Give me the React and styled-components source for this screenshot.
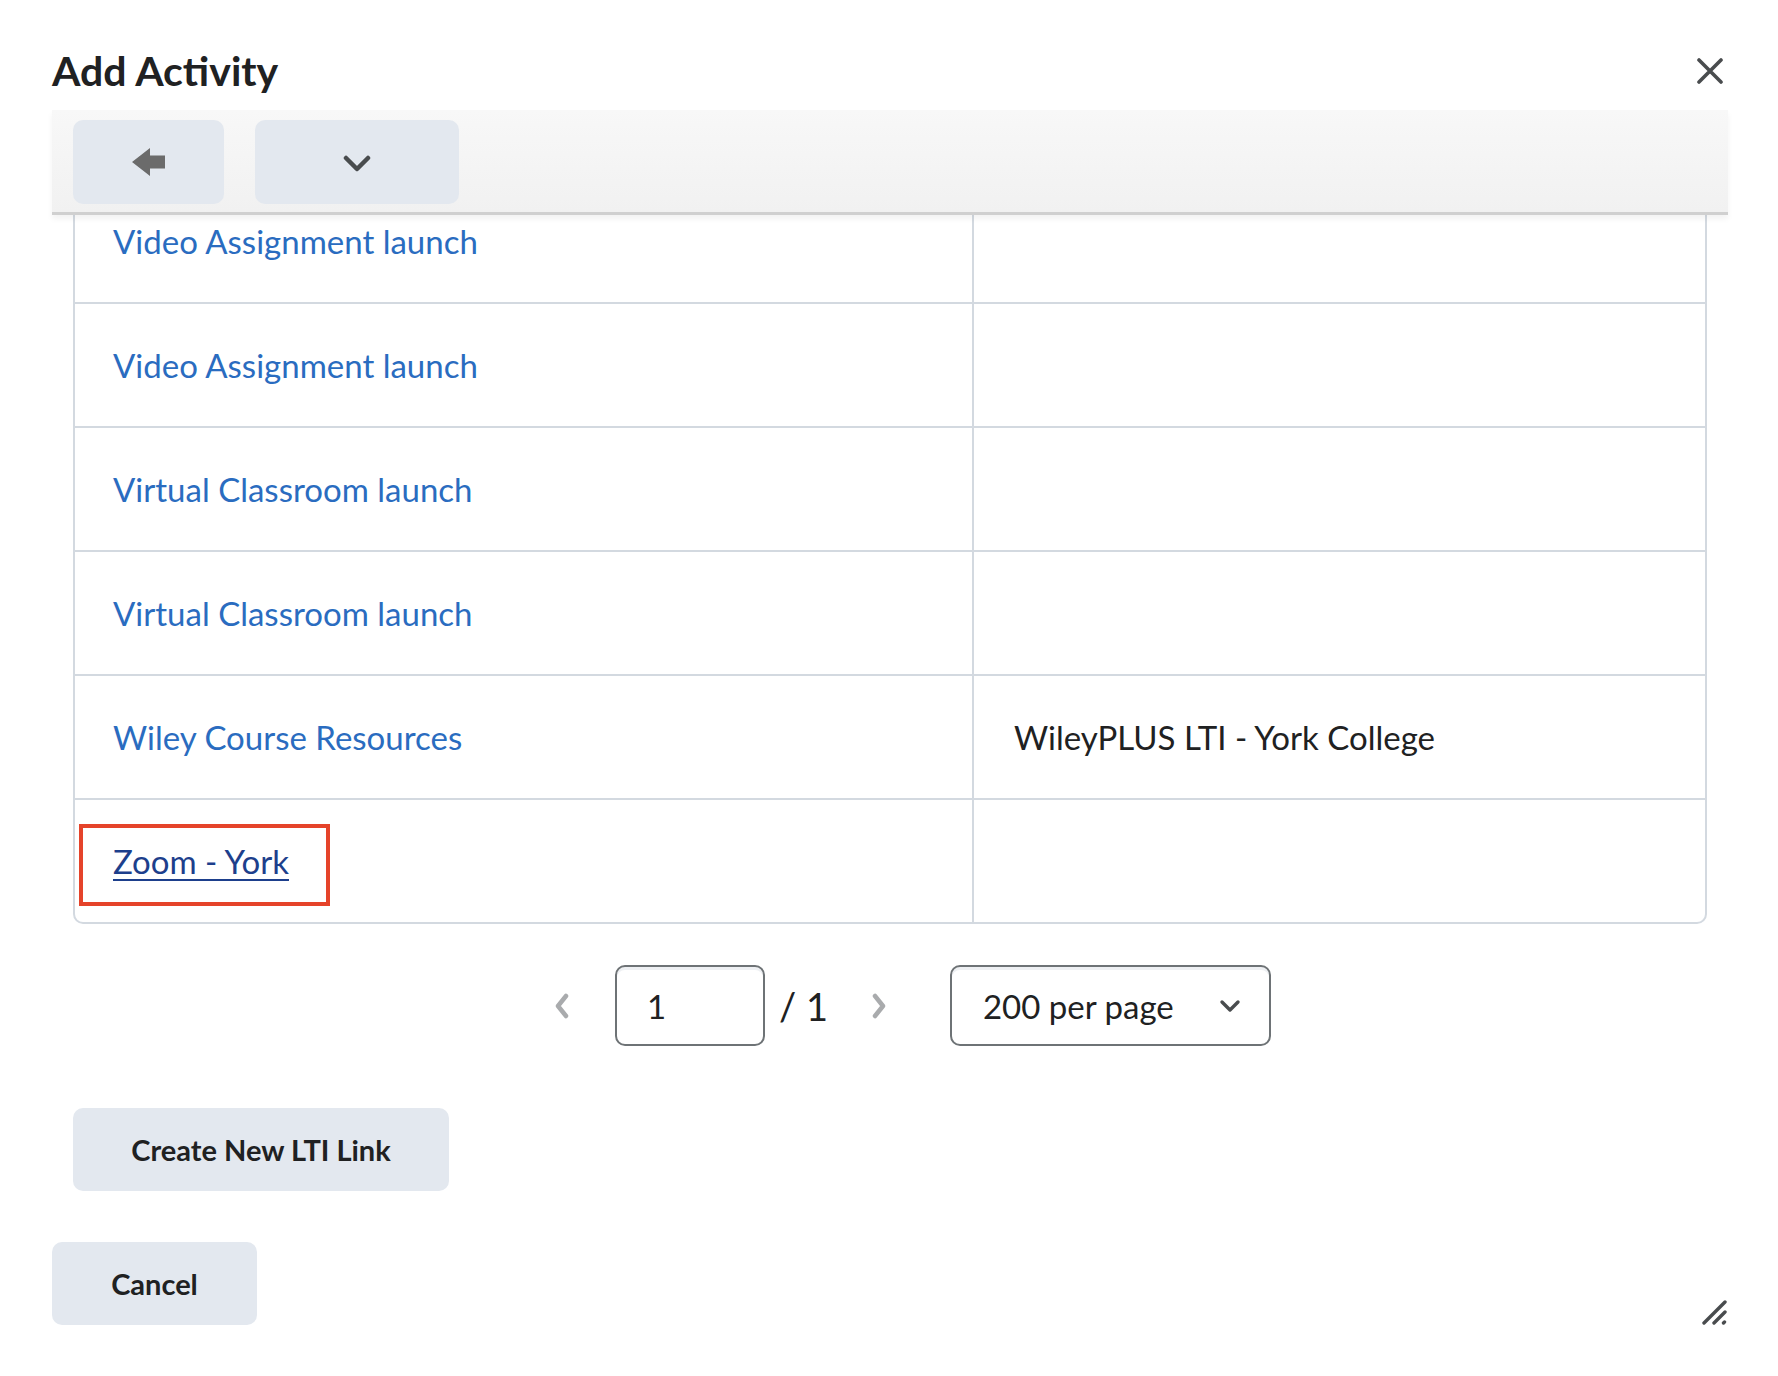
import React, { useLayoutEffect, useRef } from "react";
import styled, { createGlobalStyle } from "styled-components";

const rows = [
  { name: "Video Assignment launch", desc: "" },
  { name: "Video Assignment launch", desc: "" },
  { name: "Virtual Classroom launch", desc: "" },
  { name: "Virtual Classroom launch", desc: "" },
  { name: "Wiley Course Resources", desc: "WileyPLUS LTI - York College" },
  { name: "Zoom - York", desc: "", highlighted: true },
];

export default function App() {
  const scrollRef = useRef(null);

  useLayoutEffect(() => {
    // the list is shown scrolled a little, first row cut by the toolbar
    if (scrollRef.current) scrollRef.current.scrollTop = 35;
  }, []);

  return (
    <Dialog>
      <GlobalStyle />
      <Header>
        <Title>Add Activity</Title>
        <CloseButton aria-label="Close">
          <svg width="26" height="26" viewBox="0 0 26 26">
            <path
              d="M2 2 L24 24 M24 2 L2 24"
              stroke="#494c4e"
              strokeWidth="3.6"
              strokeLinecap="round"
            />
          </svg>
        </CloseButton>
      </Header>

      <Toolbar>
        <ToolButton $width={151} aria-label="Back">
          <svg width="34" height="30" viewBox="0 0 34 30">
            <path d="M0 15 L18 1 L18 8.5 L33 8.5 L33 21.5 L18 21.5 L18 29 Z" fill="#6b6b6b" />
          </svg>
        </ToolButton>
        <ToolButton $width={204} aria-label="More">
          <svg width="28" height="18" viewBox="0 0 28 18" style={{ marginTop: 4 }}>
            <path
              d="M3 3 L14 14 L25 3"
              fill="none"
              stroke="#494c4e"
              strokeWidth="4.5"
              strokeLinecap="round"
              strokeLinejoin="round"
            />
          </svg>
        </ToolButton>
      </Toolbar>

      <ScrollArea ref={scrollRef}>
        <Table>
          {rows.map((r, i) => (
            <Row key={i} $last={i === rows.length - 1}>
              <NameCell>
                {r.highlighted ? (
                  <Highlight>
                    <ActiveLink href="#">{r.name}</ActiveLink>
                  </Highlight>
                ) : (
                  <Link href="#">{r.name}</Link>
                )}
              </NameCell>
              <DescCell>{r.desc}</DescCell>
            </Row>
          ))}
        </Table>
      </ScrollArea>

      <Pager>
        <PageArrow aria-label="Previous page">
          <svg width="18" height="28" viewBox="0 0 18 28">
            <path d="M13 4 L5 14 L13 24" fill="none" stroke="#a9abad" strokeWidth="4.5" strokeLinecap="round" strokeLinejoin="round" />
          </svg>
        </PageArrow>
        <PageInput defaultValue="1" />
        <PageTotal>/ 1</PageTotal>
        <PageArrow aria-label="Next page">
          <svg width="18" height="28" viewBox="0 0 18 28">
            <path d="M5 4 L13 14 L5 24" fill="none" stroke="#a9abad" strokeWidth="4.5" strokeLinecap="round" strokeLinejoin="round" />
          </svg>
        </PageArrow>
        <PerPage>
          <span>200 per page</span>
          <svg width="22" height="14" viewBox="0 0 22 14">
            <path d="M3 3 L11 11 L19 3" fill="none" stroke="#494c4e" strokeWidth="3.4" strokeLinecap="round" strokeLinejoin="round" />
          </svg>
        </PerPage>
      </Pager>

      <CreateRow>
        <ActionButton>Create New LTI Link</ActionButton>
      </CreateRow>

      <Footer>
        <ActionButton $small>Cancel</ActionButton>
      </Footer>

      <ResizeGrip width="28" height="26" viewBox="0 0 28 26">
        <path d="M3 23 L24 2 M13 23 L24 12 M22.5 23 L23.5 22" stroke="#494c4e" strokeWidth="3.4" strokeLinecap="round" />
      </ResizeGrip>
    </Dialog>
  );
}

const GlobalStyle = createGlobalStyle`
  html, body {
    margin: 0;
    padding: 0;
    background: #ffffff;
  }
  body {
    font-family: Lato, "Open Sans", sans-serif;
    color: #202122;
  }
  * {
    box-sizing: border-box;
  }
`;

const Dialog = styled.div`
  position: relative;
  width: 1778px;
  height: 1376px;
  display: flex;
  flex-direction: column;
`;

const Header = styled.div`
  display: flex;
  align-items: center;
  justify-content: space-between;
  padding: 47px 48px 15px 52px;
`;

const Title = styled.h1`
  margin: 0;
  font-size: 41px;
  line-height: 48px;
  font-weight: 700;
  color: #202122;
`;

const CloseButton = styled.button`
  width: 40px;
  height: 40px;
  padding: 0;
  border: none;
  background: none;
  display: flex;
  align-items: center;
  justify-content: center;
`;

const Toolbar = styled.div`
  position: relative;
  z-index: 1;
  margin: 0 50px 0 52px;
  height: 105px;
  padding: 10px 21px 0;
  display: flex;
  gap: 31px;
  background: linear-gradient(#f8f8f8, #f1f1f1);
  border-bottom: 3px solid #d0d0d0;
  box-shadow: 0 4px 6px rgba(0, 0, 0, 0.05);
`;

const ToolButton = styled.button`
  width: ${(p) => p.$width}px;
  height: 84px;
  border: none;
  border-radius: 10px;
  background: #e3e8ef;
  display: flex;
  align-items: center;
  justify-content: center;
  padding: 0;
`;

const ScrollArea = styled.div`
  margin: 0 71px 0 73px;
  height: 709px;
  overflow: hidden;
`;

const Table = styled.div`
  border: 2px solid #d3d9e0;
  border-top: none;
  border-radius: 0 0 10px 10px;
`;

const Row = styled.div`
  display: grid;
  grid-template-columns: 899px 1fr;
  height: ${(p) => (p.$last ? 122 : 124)}px;
  border-bottom: ${(p) => (p.$last ? "none" : "2px solid #d3d9e0")};
`;

const NameCell = styled.div`
  display: flex;
  align-items: center;
  padding-left: 38px;
  border-right: 2px solid #d3d9e0;
`;

const DescCell = styled.div`
  display: flex;
  align-items: center;
  padding-left: 40px;
  font-size: 33px;
  color: #202122;
`;

const Link = styled.a`
  font-size: 33px;
  color: #2a6cc0;
  text-decoration: none;
`;

const ActiveLink = styled(Link)`
  color: #1d3f8c;
  text-decoration: underline;
  text-decoration-thickness: 2px;
  text-underline-offset: 5px;
`;

const Highlight = styled.span`
  display: inline-block;
  margin: 8px 0 0 -34px;
  padding: 13px 37px 14px 30px;
  border: 4px solid #e5432a;
  line-height: 40px;
`;

const Pager = styled.div`
  display: flex;
  align-items: center;
  justify-content: center;
  padding-left: 25px;
  margin-top: 41px;
`;

const PageArrow = styled.button`
  width: 60px;
  height: 60px;
  border: none;
  background: none;
  padding: 0;
  display: flex;
  align-items: center;
  justify-content: center;
  margin-right: 23px;
  &:nth-of-type(2) {
    margin: 0 41px 0 21px;
  }
`;

const PageInput = styled.input`
  width: 150px;
  height: 81px;
  border: 2px solid #6e7376;
  border-radius: 10px;
  padding: 0 0 0 30px;
  font-family: Lato, sans-serif;
  font-size: 33px;
  color: #202122;
  box-shadow: inset 0 3px 0 #eef0f3;
  outline: none;
`;

const PageTotal = styled.span`
  margin-left: 14px;
  font-size: 38px;
  color: #202122;
`;

const PerPage = styled.div`
  width: 321px;
  height: 81px;
  border: 2px solid #6e7376;
  border-radius: 10px;
  padding: 0 28px 0 31px;
  display: flex;
  align-items: center;
  justify-content: space-between;
  font-size: 33px;
  box-shadow: inset 0 3px 0 #eef0f3;
`;

const CreateRow = styled.div`
  margin-top: 62px;
  padding-left: 73px;
`;

const Footer = styled.div`
  margin-top: 51px;
  padding-left: 52px;
`;

const ActionButton = styled.button`
  height: 83px;
  width: ${(p) => (p.$small ? 205 : 376)}px;
  border: none;
  border-radius: 10px;
  background: #e3e8ef;
  font-family: Lato, sans-serif;
  font-weight: 700;
  font-size: 29px;
  color: #202122;
`;

const ResizeGrip = styled.svg`
  position: absolute;
  left: 1701px;
  top: 1300px;
`;
